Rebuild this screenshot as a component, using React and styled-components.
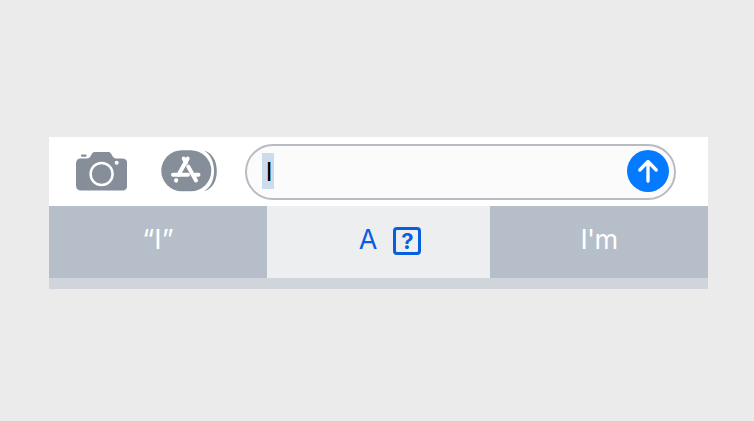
import React from 'react';
import styled, { createGlobalStyle } from 'styled-components';

const GlobalStyle = createGlobalStyle`
  * {
    box-sizing: border-box;
  }

  body {
    margin: 0;
    background: #ebebeb;
    font-family: Inter, 'Liberation Sans', sans-serif;
  }
`;

// Scoped styles

const Page = styled.main`
  display: flex;
  height: 421px;
  padding: 137px 46px 0 49px;
`;

const Keyboard = styled.section`
  width: 659px;
  height: 152px;
  background: #d0d5db;
`;

const Toolbar = styled.div`
  display: flex;
  align-items: flex-start;
  height: 69px;
  padding: 7px 32px 0 26px;
  background: #fff;
`;

const IconButton = styled.button`
  flex-shrink: 0;
  height: 44px;
  width: ${({ $width }) => $width}px;
  margin: 5px ${({ $gap }) => $gap}px 0 0;
  padding: 0;
  border: 0;
  background: none;

  & svg {
    display: block;
  }
`;

const Field = styled.div`
  display: flex;
  align-items: center;
  justify-content: space-between;
  width: 431px;
  height: 56px;
  padding: 0 5px 0 15px;
  border: 2px solid #b9bac2;
  border-radius: 28px;
  background: #fbfbfc;
`;

const Selection = styled.span`
  width: 12px;
  height: 36px;
  margin-top: -2px;
  padding-left: 2px;
  background: #cbdcec;
  color: #000;
  font-size: 25px;
  line-height: 38px;
  text-align: center;
`;

const SendButton = styled.button`
  width: 42px;
  height: 42px;
  margin-top: -2px;
  padding: 0;
  border: 0;
  border-radius: 50%;
  background: #047aff;

  & svg {
    display: block;
  }
`;

const Suggestions = styled.div`
  display: grid;
  grid-template-columns: 218px 223px 218px;
  height: 72px;
`;

const Suggestion = styled.div`
  display: flex;
  align-items: center;
  justify-content: center;
  gap: 16px;
  padding: 0 0 5px ${({ $active }) => ($active ? 23 : 0)}px;
  background: ${({ $active }) => ($active ? '#edeef0' : '#b6bec9')};
  color: ${({ $active }) => ($active ? '#075fe0' : '#fff')};
  font-size: 27px;
  font-weight: 400;
  letter-spacing: ${({ $spacing = 0 }) => $spacing}px;
  line-height: 1;
`;

const MissingGlyph = styled.span`
  display: flex;
  align-items: center;
  justify-content: center;
  width: 28px;
  height: 28px;
  margin-top: 3px;
  border: 3px solid #075fe0;
  border-radius: 4px;
  font-size: 22px;
  font-weight: 700;
`;

// Icons

const CameraIcon = () => (
  <svg width="52" height="44" viewBox="75 149 52 44">
    <path
      d="M81 158.4h6c1.7 0 2.7-.8 3.5-2.2l1.3-2.2c.8-1.4 1.7-2 3.3-2h12.8c1.7 0 2.6.6 3.4 2l1.3 2.2c.8 1.4 1.8 2.2 3.5 2.2h5.9c3.5 0 5.300 1.8 5.300 5.2v21.600c0 3.600-1.800 5.300-5.300 5.300H81.400c-3.600 0-5.400-1.700-5.400-5.300v-21.600c0-3.400 1.800-5.200 5-5.200z"
      fill="#868e99"
    />
    <rect x="81" y="154.500" width="5.600" height="2.300" rx="0.800" fill="#868e99" />
    <circle cx="101.600" cy="174" r="11" fill="none" stroke="#fff" strokeWidth="2.500" />
    <circle cx="116.700" cy="162.800" r="2" fill="#fff" />
  </svg>
);

const AppStoreIcon = () => (
  <svg width="58" height="44" viewBox="160 149 58 44">
    <path
      d="M204 150.500C212.500 153 216.800 161 216.800 171S212.500 189 204 191.300C211 187 214 180 214 171S211 155 204 150.500z"
      fill="#868e99"
    />
    <rect x="161.300" y="150.200" width="50" height="41" rx="20.500" fill="#868e99" />
    <g stroke="#fff" strokeWidth="4" strokeLinecap="round" fill="none">
      <path d="M187.700 158.500L178.500 174.800" />
      <path d="M183.700 158.500L186 162.500" />
      <path d="M188.200 166.500L196 180.500" />
      <path d="M173 174.800H188" />
      <path d="M195 174.800H198.500" />
      <path d="M176.300 180.100L176 180.600" />
    </g>
  </svg>
);

const ArrowIcon = () => (
  <svg width="42" height="42" viewBox="0 0 42 42">
    <path
      d="M21 31V12M12.800 20L21 11.500L29.200 20"
      fill="none"
      stroke="#fff"
      strokeWidth="3.300"
      strokeLinecap="round"
      strokeLinejoin="round"
    />
  </svg>
);

// Main component

const App = () => (
  <>
    <GlobalStyle />
    <Page>
      <Keyboard>
        <Toolbar>
          <IconButton $width={52} $gap={33} aria-label="Camera">
            <CameraIcon />
          </IconButton>
          <IconButton $width={58} $gap={27} aria-label="Apps">
            <AppStoreIcon />
          </IconButton>
          <Field>
            <Selection>I</Selection>
            <SendButton aria-label="Send">
              <ArrowIcon />
            </SendButton>
          </Field>
        </Toolbar>
        <Suggestions>
          <Suggestion $spacing={0.2}>“I”</Suggestion>
          <Suggestion $active>
            A<MissingGlyph>?</MissingGlyph>
          </Suggestion>
          <Suggestion $spacing={-0.6}>I'm</Suggestion>
        </Suggestions>
      </Keyboard>
    </Page>
  </>
);

export default App;
